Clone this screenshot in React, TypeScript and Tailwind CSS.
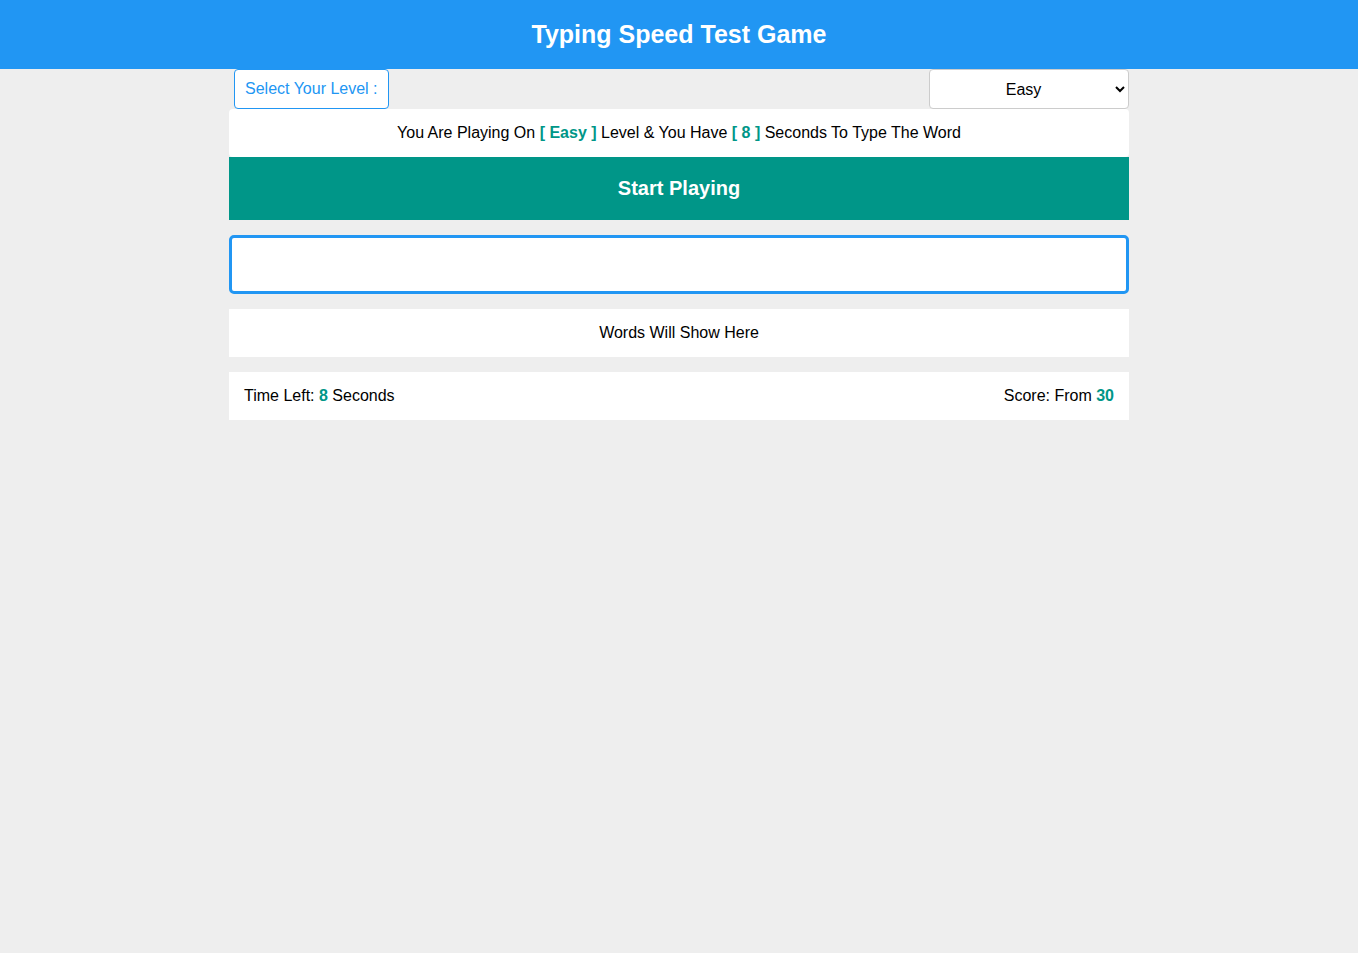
export default function App() {
  return (
    <div className="min-h-[953px] bg-[#eeeeee] font-['Liberation_Sans',Arial,sans-serif]">
      <h1 className="h-[69px] bg-[#2196f3] text-white text-[25px] font-bold flex items-center justify-center m-0">
        Typing Speed Test Game
      </h1>
      <div className="w-[900px] mx-auto">
        <div className="flex justify-between items-center h-[40px]">
          <span className="ml-[5px] h-[40px] w-[155px] border border-[#2196f3] rounded-[4px] text-[#2196f3] text-[16px] flex items-center pl-[10px] bg-white">
            Select Your Level :
          </span>
          <select
            defaultValue="Easy"
            className="h-[40px] w-[200px] border border-[#cccccc] rounded-[4px] bg-white text-[16px] text-black text-center pl-[1px]"
          >
            <option>Easy</option>
            <option>Normal</option>
            <option>Hard</option>
          </select>
        </div>
        <div className="bg-white h-[48px] flex items-center justify-center text-[16px] text-black rounded-[4px]">
          <span>
            You Are Playing On <span className="text-[#009688] font-bold">[ Easy ]</span> Level &amp; You Have{" "}
            <span className="text-[#009688] font-bold">[ 8 ]</span> Seconds To Type The Word
          </span>
        </div>
        <div className="bg-[#009688] h-[63px] flex items-center justify-center text-white text-[20px] font-bold cursor-pointer pb-[1px]">
          Start Playing
        </div>
        <input
          type="text"
          className="block w-full h-[59px] mt-[15px] border-[3px] border-[#2196f3] rounded-[5px] bg-white outline-none px-3 text-[18px]"
        />
        <div className="bg-white h-[48px] mt-[15px] flex items-center justify-center text-[16px] text-black">
          Words Will Show Here
        </div>
        <div className="bg-white h-[48px] mt-[15px] flex items-center justify-between px-[15px] text-[16px] text-black">
          <span>
            Time Left: <span className="text-[#009688] font-bold">8</span> Seconds
          </span>
          <span>
            Score: From <span className="text-[#009688] font-bold">30</span>
          </span>
        </div>
      </div>
    </div>
  );
}
